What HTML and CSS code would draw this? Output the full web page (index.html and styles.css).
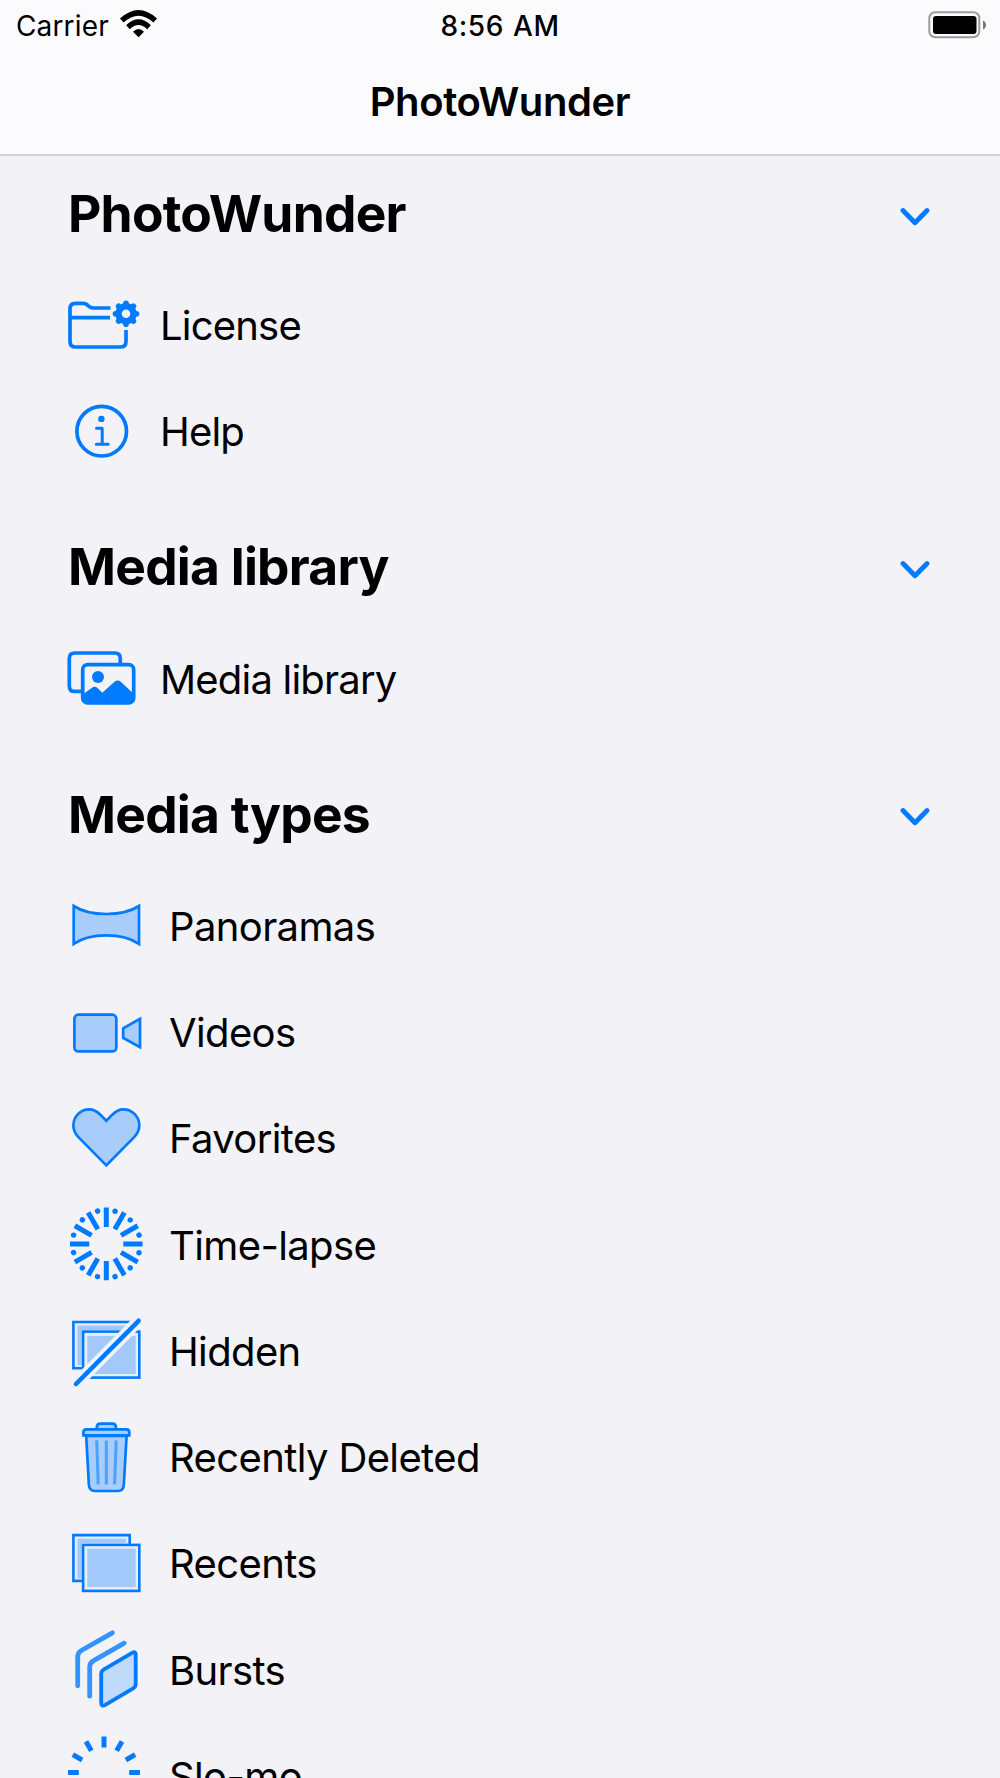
FILE: index.html
```html
<!DOCTYPE html>
<html lang="en">
<head>
    <meta charset="UTF-8">
    <meta name="viewport" content="width=device-width, initial-scale=1.0">
    <title>PhotoWunder</title>
    <link rel="stylesheet" href="styles.css">
</head>
<body>
    <header>
        <div class="status-bar">
            <div class="carrier">
                <span>Carrier</span>
                <svg class="wifi" viewBox="0 0 37 27">
                    <path d="M1.8 10.6 Q18.5 -4.8 35.2 10.6" />
                    <path d="M8 17.2 Q18.5 7.2 29 17.2" />
                    <path class="solid" d="M13 21.8 Q18.5 16.4 24 21.8 L18.5 27.2 Z" />
                </svg>
            </div>
            <div class="time">8:56 AM</div>
            <div class="battery">
                <svg viewBox="0 0 60 28">
                    <rect x="1.3" y="1.3" width="50" height="25" rx="6" fill="none" stroke="#9b9b9d" stroke-width="2" />
                    <rect x="5" y="5" width="43.5" height="18" rx="3" />
                    <path d="M55 9.5 Q58 11 58 14 Q58 17 55 18.5 Z" fill="#77777a" />
                </svg>
            </div>
        </div>
        <h1>PhotoWunder</h1>
    </header>

    <main>
        <section>
            <div class="section-title">
                <h2>PhotoWunder</h2>
                <svg class="chevron" viewBox="0 0 30 20"><path d="M3 3.5 L15 15.8 L27 3.5" /></svg>
            </div>
            <ul>
                <li>
                    <svg class="icon outline" viewBox="0 0 80 80">
                        <path d="M46.5 22 H29.5 Q26.5 22 24.5 20 L22.8 18.5 Q21.3 17.3 19.3 17.3 H11.5 Q6 17.3 6 22.8 V55.5 Q6 61 11.5 61 H56.5 Q62 61 62 55.5 V44" />
                        <path d="M6 31.7 H46" />
                        <circle cx="62" cy="27.7" r="7.5" stroke-width="6.4" />
                        <g stroke-width="5.6" stroke-linecap="round">
                            <path d="M62 17.2 V19 M62 36.4 V38.2 M51.5 27.7 H53 M71 27.7 H72.5" />
                            <path d="M54.6 20.3 L55.8 21.5 M68.2 33.9 L69.4 35.1 M54.6 35.1 L55.8 33.9 M68.2 21.5 L69.4 20.3" />
                        </g>
                    </svg>
                    <span>License</span>
                </li>
                <li>
                    <svg class="icon outline" viewBox="0 0 80 80">
                        <circle cx="37.7" cy="39.2" r="24.8" />
                        <circle class="solid" cx="37.4" cy="26.9" r="3.2" />
                        <path class="thin" d="M32.5 36.2 H38.2 V52.2 M32.3 52.2 H44.2" stroke-linecap="round" stroke-linejoin="round" />
                    </svg>
                    <span>Help</span>
                </li>
            </ul>
        </section>

        <section>
            <div class="section-title">
                <h2>Media library</h2>
                <svg class="chevron" viewBox="0 0 30 20"><path d="M3 3.5 L15 15.8 L27 3.5" /></svg>
            </div>
            <ul>
                <li>
                    <svg class="icon outline" viewBox="0 0 80 80">
                        <path d="M18 52.4 H10.8 Q5.3 52.4 5.3 46.9 V19.5 Q5.3 14 10.8 14 H50.8 Q56.3 14 56.3 19.5 V24.5" />
                        <rect x="18.7" y="25.6" width="51" height="38.3" rx="5" />
                        <circle class="solid" cx="34" cy="38" r="6" />
                        <path class="solid" d="M19.5 55 L28 48.8 Q30.7 46.6 33.3 48.8 L38.3 53.7 L50.2 43 Q53.7 40.2 57 43 L69.5 54.8 V60 Q69 64 65 64 H24 Q19.5 64 19.5 60 Z" />
                    </svg>
                    <span>Media library</span>
                </li>
            </ul>
        </section>

        <section class="types">
            <div class="section-title">
                <h2>Media types</h2>
                <svg class="chevron" viewBox="0 0 30 20"><path d="M3 3.5 L15 15.8 L27 3.5" /></svg>
            </div>
            <ul>
                <li>
                    <svg class="icon tinted" viewBox="0 0 80 80">
                        <path d="M9.7 20 Q22 28 42.3 28 Q62.7 28 75 20 V58 Q62.7 49.4 42.3 49.4 Q22 49.4 9.7 58 Z" />
                    </svg>
                    <span>Panoramas</span>
                </li>
                <li>
                    <svg class="icon tinted" viewBox="0 0 80 80">
                        <rect x="10.4" y="21.7" width="41.9" height="36.7" rx="4" />
                        <path d="M76 25.9 V54.2 L59.2 45 V35.2 Z" />
                    </svg>
                    <span>Videos</span>
                </li>
                <li>
                    <svg class="icon tinted" viewBox="0 0 80 80">
                        <path d="M42.3 21.8 L36.6 15.9 C32 11.5 28.5 10.4 25.3 10.4 C16.2 10.4 9.4 17.6 9.4 26.6 C9.4 31.3 11.3 34.9 14.2 37.9 L42.3 66.4 L70.4 37.9 C73.3 34.9 75.3 31.3 75.3 26.6 C75.3 17.6 68.4 10.4 59.3 10.4 C56.1 10.4 52.6 11.5 48 15.9 Z" />
                    </svg>
                    <span>Favorites</span>
                </li>
                <li>
                    <svg class="icon ticks" viewBox="0 0 80 80">
                        <defs>
                            <g id="lapse">
                                <path d="M0 -36.3 V-17 M0 17 V36.3" />
                                <circle class="solid" cx="8.8" cy="-32.7" r="2.7" />
                                <circle class="solid" cx="-8.8" cy="32.7" r="2.7" />
                            </g>
                        </defs>
                        <g transform="translate(42.3 38.9)">
                            <use href="#lapse" />
                            <use href="#lapse" transform="rotate(30)" />
                            <use href="#lapse" transform="rotate(60)" />
                            <use href="#lapse" transform="rotate(90)" />
                            <use href="#lapse" transform="rotate(120)" />
                            <use href="#lapse" transform="rotate(150)" />
                        </g>
                    </svg>
                    <span>Time-lapse</span>
                </li>
                <li>
                    <svg class="icon stack" viewBox="0 0 80 80">
                        <path class="frame" d="M19 57.3 H9.4 V11 H67" />
                        <path class="shade" d="M13.5 54.3 V14.5 H67 V19 H17.8 V54.3 Z" />
                        <rect class="frame" x="19.1" y="20.6" width="56.2" height="46" />
                        <rect class="shade" x="23.3" y="24.9" width="48.4" height="38.1" />
                        <path class="gap" d="M8 77 L78.7 5.6" />
                        <path class="slash" d="M12 73 L74.6 9.8" />
                    </svg>
                    <span>Hidden</span>
                </li>
                <li>
                    <svg class="icon tinted" viewBox="0 0 80 80">
                        <path d="M22.2 18 L24.9 67 Q25.3 73 31 73 H54 Q59.5 73 59.8 67 L62.6 18 Z" />
                        <path d="M32.8 11.5 V9.4 Q32.8 5.6 36.6 5.6 H48.2 Q52 5.6 52 9.4 V11.5" />
                        <path d="M19.4 17.4 V14.4 Q19.4 11.4 22.4 11.4 H62.3 Q65.3 11.4 65.3 14.4 V17.4 Z" />
                        <path class="ribs" d="M32.7 22.4 L34.2 66.4 M42.3 22.4 V66.4 M52.2 22.4 L50.6 66.4" />
                    </svg>
                    <span>Recently Deleted</span>
                </li>
                <li>
                    <svg class="icon stack" viewBox="0 0 80 80">
                        <path class="frame" d="M19 56.9 H9.4 V11.1 H65.7 V20" />
                        <path class="shade" d="M13.5 54.3 V14.7 H62 V19 H17.8 V54.3 Z" />
                        <rect class="frame" x="19.1" y="20.9" width="56.2" height="46" />
                        <rect class="shade" x="23.3" y="24.7" width="48.4" height="38.4" />
                    </svg>
                    <span>Recents</span>
                </li>
                <li>
                    <svg class="icon bursts" viewBox="0 0 80 80">
                        <path d="M48.4 2.8 L17.3 20.5 Q13.7 22.6 13.7 26.7 V55.8" />
                        <path d="M60.2 13.2 L29.2 30.9 Q25.7 32.9 25.7 37 V66.2" />
                        <path class="front" d="M40 39.4 L68.5 22.6 Q71.7 21 71.7 24.6 V54 Q71.7 56.8 69.2 58.3 L41.3 74.8 Q37.2 77 37.2 73 V44 Q37.2 41 40 39.4 Z" />
                    </svg>
                    <span>Bursts</span>
                </li>
                <li>
                    <svg class="icon ticks" viewBox="0 0 80 80">
                        <defs>
                            <path id="slomo" d="M0 -36 V-25.2 M0 25.2 V36" />
                        </defs>
                        <g transform="translate(40 36.6)">
                            <use href="#slomo" />
                            <use href="#slomo" transform="rotate(30)" />
                            <use href="#slomo" transform="rotate(60)" />
                            <use href="#slomo" transform="rotate(90)" />
                            <use href="#slomo" transform="rotate(120)" />
                            <use href="#slomo" transform="rotate(150)" />
                        </g>
                    </svg>
                    <span>Slo-mo</span>
                </li>
            </ul>
        </section>
    </main>
</body>
</html>
```
FILE: styles.css
```css
html {
    height: 100%;
    overflow: hidden;
}

body {
    height: 100%;
    margin: 0;
    overflow: hidden;
    background-color: #f2f2f7;
    color: #000;
    font-family: Inter, 'Liberation Sans', sans-serif;
}

header {
    box-sizing: border-box;
    height: 156px;
    background-color: #fbfbfd;
    border-bottom: 2px solid #d0d0d4;
}

.status-bar {
    display: grid;
    grid-template-columns: 1fr auto 1fr;
    align-items: center;
    height: 51px;
    padding: 0 12px 0 16px;
    font-size: 28px;
}

.carrier {
    display: flex;
    align-items: center;
    gap: 11px;
    letter-spacing: 0.15px;
}

.wifi {
    width: 37px;
    height: 27px;
    margin-top: -4px;
    overflow: visible;
    fill: none;
    stroke: #000;
    stroke-width: 5.4;
}

.wifi .solid {
    fill: #000;
    stroke: none;
}

.time {
    margin-right: 4px;
    font-weight: 500;
    letter-spacing: 0.6px;
    word-spacing: 1px;
}

.battery {
    display: flex;
    justify-content: flex-end;
}

.battery svg {
    width: 60px;
    height: 28px;
    margin-top: -2px;
}

h1 {
    margin: 0;
    padding-top: 26px;
    text-align: center;
    font-size: 40px;
    line-height: 50px;
    font-weight: 600;
    letter-spacing: -0.4px;
}

section + section {
    padding-top: 24.5px;
}

.section-title {
    display: flex;
    align-items: center;
    justify-content: space-between;
    box-sizing: border-box;
    height: 116.5px;
    padding: 0 70px 0 68px;
}

h2 {
    margin: -3px 0 0;
    font-size: 51.5px;
    line-height: 60px;
    font-weight: 700;
    letter-spacing: -0.75px;
}

.chevron {
    width: 30px;
    height: 20px;
    margin-top: 4.5px;
    fill: none;
    stroke: #007aff;
    stroke-width: 4.8;
    stroke-linecap: round;
    stroke-linejoin: round;
}

ul {
    margin: 0;
    padding: 0;
    list-style: none;
}

li {
    display: flex;
    align-items: center;
    height: 106.25px;
    padding-left: 64px;
    font-size: 40px;
    letter-spacing: -0.8px;
}

li span {
    margin-left: 16px;
    white-space: nowrap;
}

.types li {
    letter-spacing: -0.62px;
}

.types li span {
    margin-left: 25px;
}

.icon {
    flex: none;
    width: 80px;
    height: 80px;
    overflow: visible;
    fill: none;
    stroke: #007aff;
    stroke-width: 3.7;
}

.icon .solid {
    fill: #007aff;
    stroke: none;
}

.outline .thin {
    stroke-width: 3;
}

.tinted {
    fill: #a9cdfa;
    stroke-width: 2.7;
}

.tinted .ribs {
    stroke: #4ba0ff;
    stroke-width: 3;
}

.ticks {
    stroke-width: 5;
}

.stack .frame {
    fill: #e6edf7;
    stroke-width: 2.6;
}

.stack .shade {
    fill: #a2c9fa;
    stroke: none;
}

.stack .gap {
    stroke: #f2f2f7;
    stroke-width: 12;
}

.stack .slash {
    stroke-width: 4.6;
    stroke-linecap: round;
}

.bursts {
    stroke: #3393ff;
    stroke-width: 4.8;
    stroke-linecap: round;
}

.bursts .front {
    fill: #c0daf9;
    stroke: #007aff;
    stroke-width: 3.8;
}
```
